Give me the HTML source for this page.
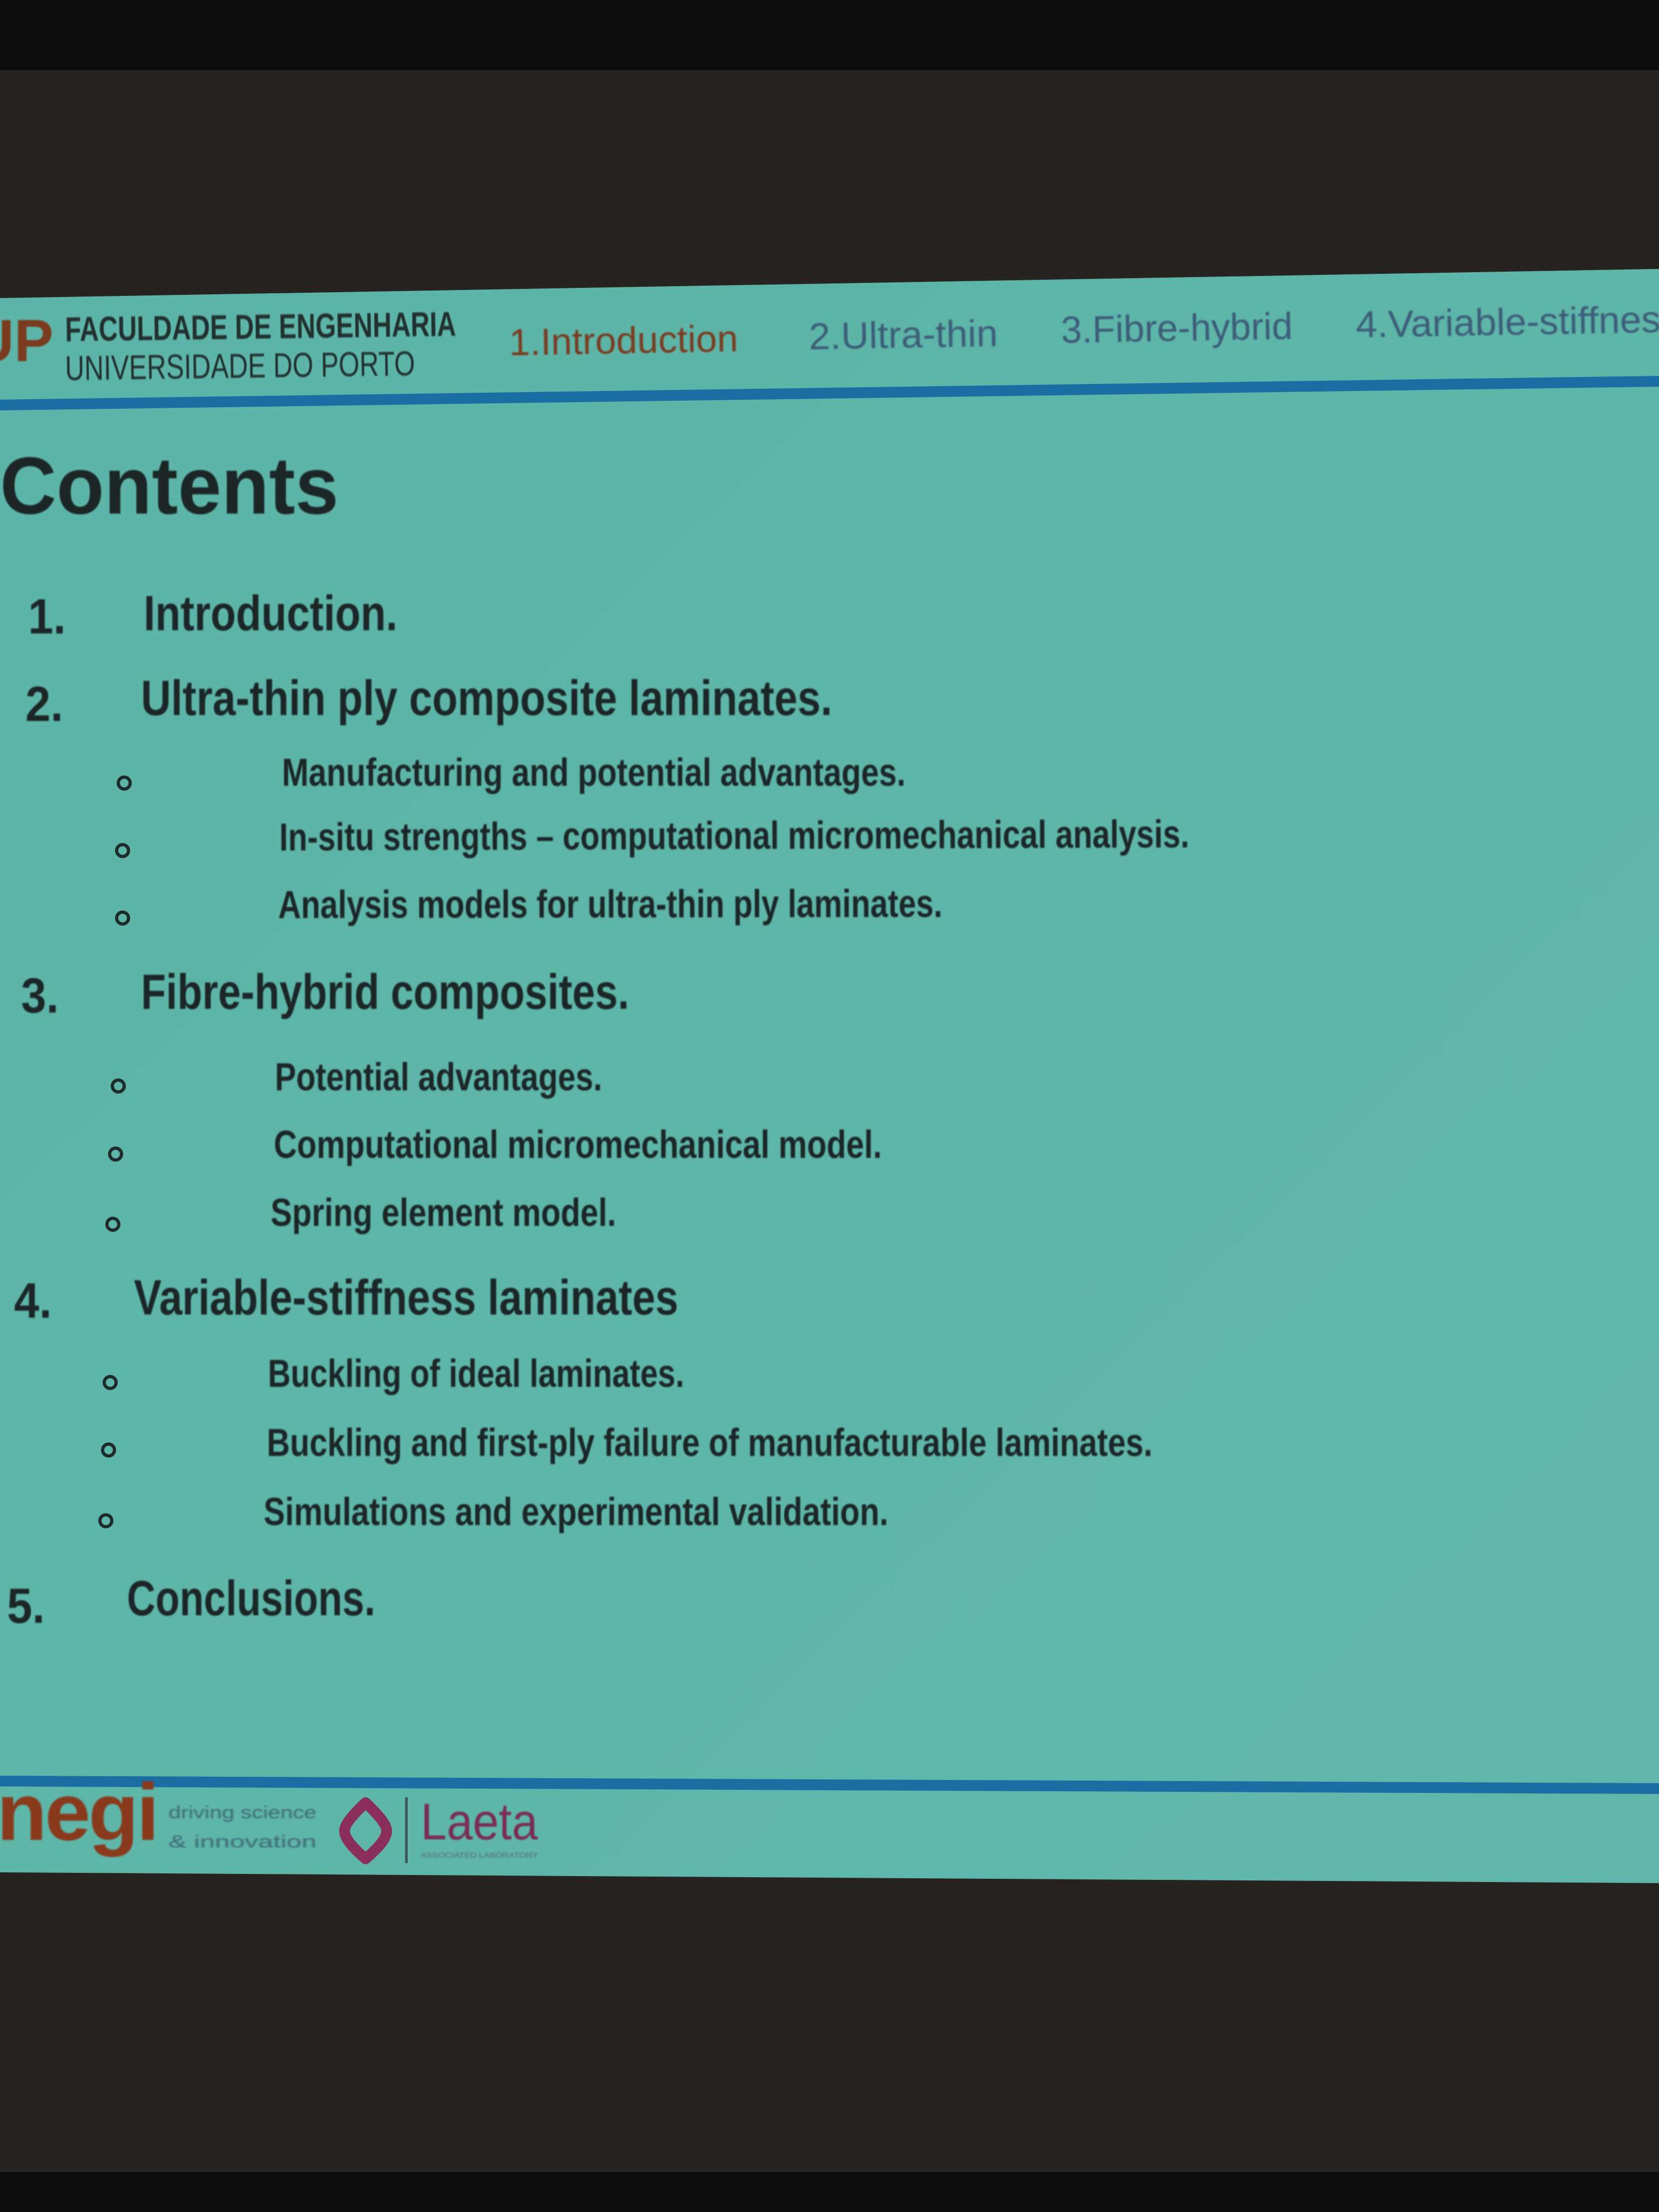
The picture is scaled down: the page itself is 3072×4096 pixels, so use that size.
<!DOCTYPE html>
<html><head><meta charset="utf-8">
<style>
html,body{margin:0;padding:0;width:3072px;height:4096px;overflow:hidden;background:#262320;}
body{position:relative;font-family:"Liberation Sans",sans-serif;}
svg.bg{position:absolute;left:0;top:0;}
.t{position:absolute;white-space:nowrap;line-height:1;display:inline-block;transform-origin:0 0;color:#1c2627;font-weight:bold;filter:blur(1.2px);}
.hd{color:#22302f;}
.nav{color:#3c5d78;font-weight:normal;}
</style></head>
<body>
<svg class="bg" width="3072" height="4096" viewBox="0 0 3072 4096">
  <defs>
    <linearGradient id="g" x1="0" y1="0" x2="1" y2="1">
      <stop offset="0" stop-color="#5cb5a8"/>
      <stop offset="1" stop-color="#60b6aa"/>
    </linearGradient>
  </defs>
  <rect x="0" y="0" width="3072" height="130" fill="#0c0c0c"/>
  <rect x="0" y="4022" width="3072" height="74" fill="#0c0c0c"/>
  <polygon points="0,552 3072,498 3072,3487 0,3467" fill="url(#g)"/>
  <polygon points="0,740 3072,696 3072,716 0,760" fill="#1a6ea4"/>
  <polygon points="0,3288 3072,3302 3072,3322 0,3308" fill="#1a6ea4"/>
  <g fill="none" stroke="#1f2a2a" stroke-width="6">
    <circle cx="230" cy="1450" r="11"/>
    <circle cx="227" cy="1575" r="11"/>
    <circle cx="227" cy="1700" r="11"/>
    <circle cx="219" cy="2011" r="11"/>
    <circle cx="214" cy="2137" r="11"/>
    <circle cx="209" cy="2267" r="11"/>
    <circle cx="204" cy="2560" r="11"/>
    <circle cx="201" cy="2685" r="11"/>
    <circle cx="196" cy="2816" r="11"/>
  </g>
  <!-- laeta diamond -->
  <path d="M677,3338 C700,3360 716,3378 716,3390 C716,3405 700,3422 677,3442 C654,3422 638,3405 638,3390 C638,3378 654,3360 677,3338 Z" fill="none" stroke="#8a2f5a" stroke-width="20" stroke-linejoin="round"/>
  <rect x="750" y="3328" width="5" height="122" fill="#3d5858"/>
</svg>

<!-- header -->
<div class="t" style="left:-53px;top:577px;font-size:110px;color:#7a3b1e;--w:152">UP</div>
<div class="t hd" style="left:120px;top:578px;font-size:64px;--w:724;--r:-0.8">FACULDADE DE ENGENHARIA</div>
<div class="t hd" style="left:120px;top:650px;font-size:64px;font-weight:normal;--w:648;--r:-0.8">UNIVERSIDADE DO PORTO</div>
<div class="t" style="left:942px;top:599px;font-size:70px;color:#7a3b20;font-weight:normal;--w:424;--r:-1">1.Introduction</div>
<div class="t nav" style="left:1497px;top:588px;font-size:70px;--w:350;--r:-1">2.Ultra-thin</div>
<div class="t nav" style="left:1964px;top:576px;font-size:70px;--w:429;--r:-1">3.Fibre-hybrid</div>
<div class="t nav" style="left:2510px;top:566px;font-size:70px;--w:600;--r:-1">4.Variable-stiffness</div>

<div class="t" style="left:0px;top:824px;font-size:150px;--w:627">Contents</div>

<!-- numbers -->
<div class="t" style="left:52px;top:1096px;font-size:92px;--w:70">1.</div>
<div class="t" style="left:47px;top:1258px;font-size:92px;--w:70">2.</div>
<div class="t" style="left:39px;top:1798px;font-size:92px;--w:70">3.</div>
<div class="t" style="left:26px;top:2363px;font-size:92px;--w:70">4.</div>
<div class="t" style="left:13px;top:2928px;font-size:92px;--w:70">5.</div>

<!-- main items -->
<div class="t" style="left:266px;top:1090px;font-size:92px;--w:470">Introduction.</div>
<div class="t" style="left:261px;top:1247px;font-size:92px;--w:1280">Ultra-thin ply composite laminates.</div>
<div class="t" style="left:261px;top:1791px;font-size:92px;--w:904">Fibre-hybrid composites.</div>
<div class="t" style="left:248px;top:2357px;font-size:92px;--w:1008">Variable-stiffness laminates</div>
<div class="t" style="left:235px;top:2914px;font-size:92px;--w:460">Conclusions.</div>

<!-- sub items -->
<div class="t" style="left:522px;top:1395px;font-size:72px;--w:1155">Manufacturing and potential advantages.</div>
<div class="t" style="left:517px;top:1515px;font-size:72px;--w:1685;--r:-0.2">In-situ strengths – computational micromechanical analysis.</div>
<div class="t" style="left:515px;top:1640px;font-size:72px;--w:1230;--r:-0.1">Analysis models for ultra-thin ply laminates.</div>
<div class="t" style="left:509px;top:1959px;font-size:72px;--w:606">Potential advantages.</div>
<div class="t" style="left:507px;top:2084px;font-size:72px;--w:1126">Computational micromechanical model.</div>
<div class="t" style="left:501px;top:2210px;font-size:72px;--w:640">Spring element model.</div>
<div class="t" style="left:496px;top:2508px;font-size:72px;--w:771">Buckling of ideal laminates.</div>
<div class="t" style="left:494px;top:2636px;font-size:72px;--w:1640">Buckling and first-ply failure of manufacturable laminates.</div>
<div class="t" style="left:488px;top:2764px;font-size:72px;--w:1157">Simulations and experimental validation.</div>

<!-- footer -->
<div class="t" style="left:-6px;top:3280px;font-size:150px;color:#8a3a1c;letter-spacing:-4px;--w:297">negi</div>
<div class="t" style="left:312px;top:3340px;font-size:32px;color:#3d6a74;font-weight:normal;--w:274">driving science</div>
<div class="t" style="left:312px;top:3394px;font-size:32px;color:#3d6a74;font-weight:normal;--w:274">&amp; innovation</div>
<div class="t" style="left:779px;top:3326px;font-size:96px;color:#7a2e52;font-weight:normal;--w:217">Laeta</div>
<div class="t" style="left:779px;top:3428px;font-size:14px;color:#5a6a70;font-weight:normal;--w:217">ASSOCIATED LABORATORY</div>

<script>
document.querySelectorAll('.t').forEach(function(el){
  var cs=getComputedStyle(el);
  var w=parseFloat(cs.getPropertyValue('--w'));
  var r=parseFloat(cs.getPropertyValue('--r'))||0;
  var nw=el.getBoundingClientRect().width;
  var s=(w&&nw)?w/nw:1;
  el.style.transform='rotate('+r+'deg) scaleX('+s+')';
});
</script>
</body></html>
